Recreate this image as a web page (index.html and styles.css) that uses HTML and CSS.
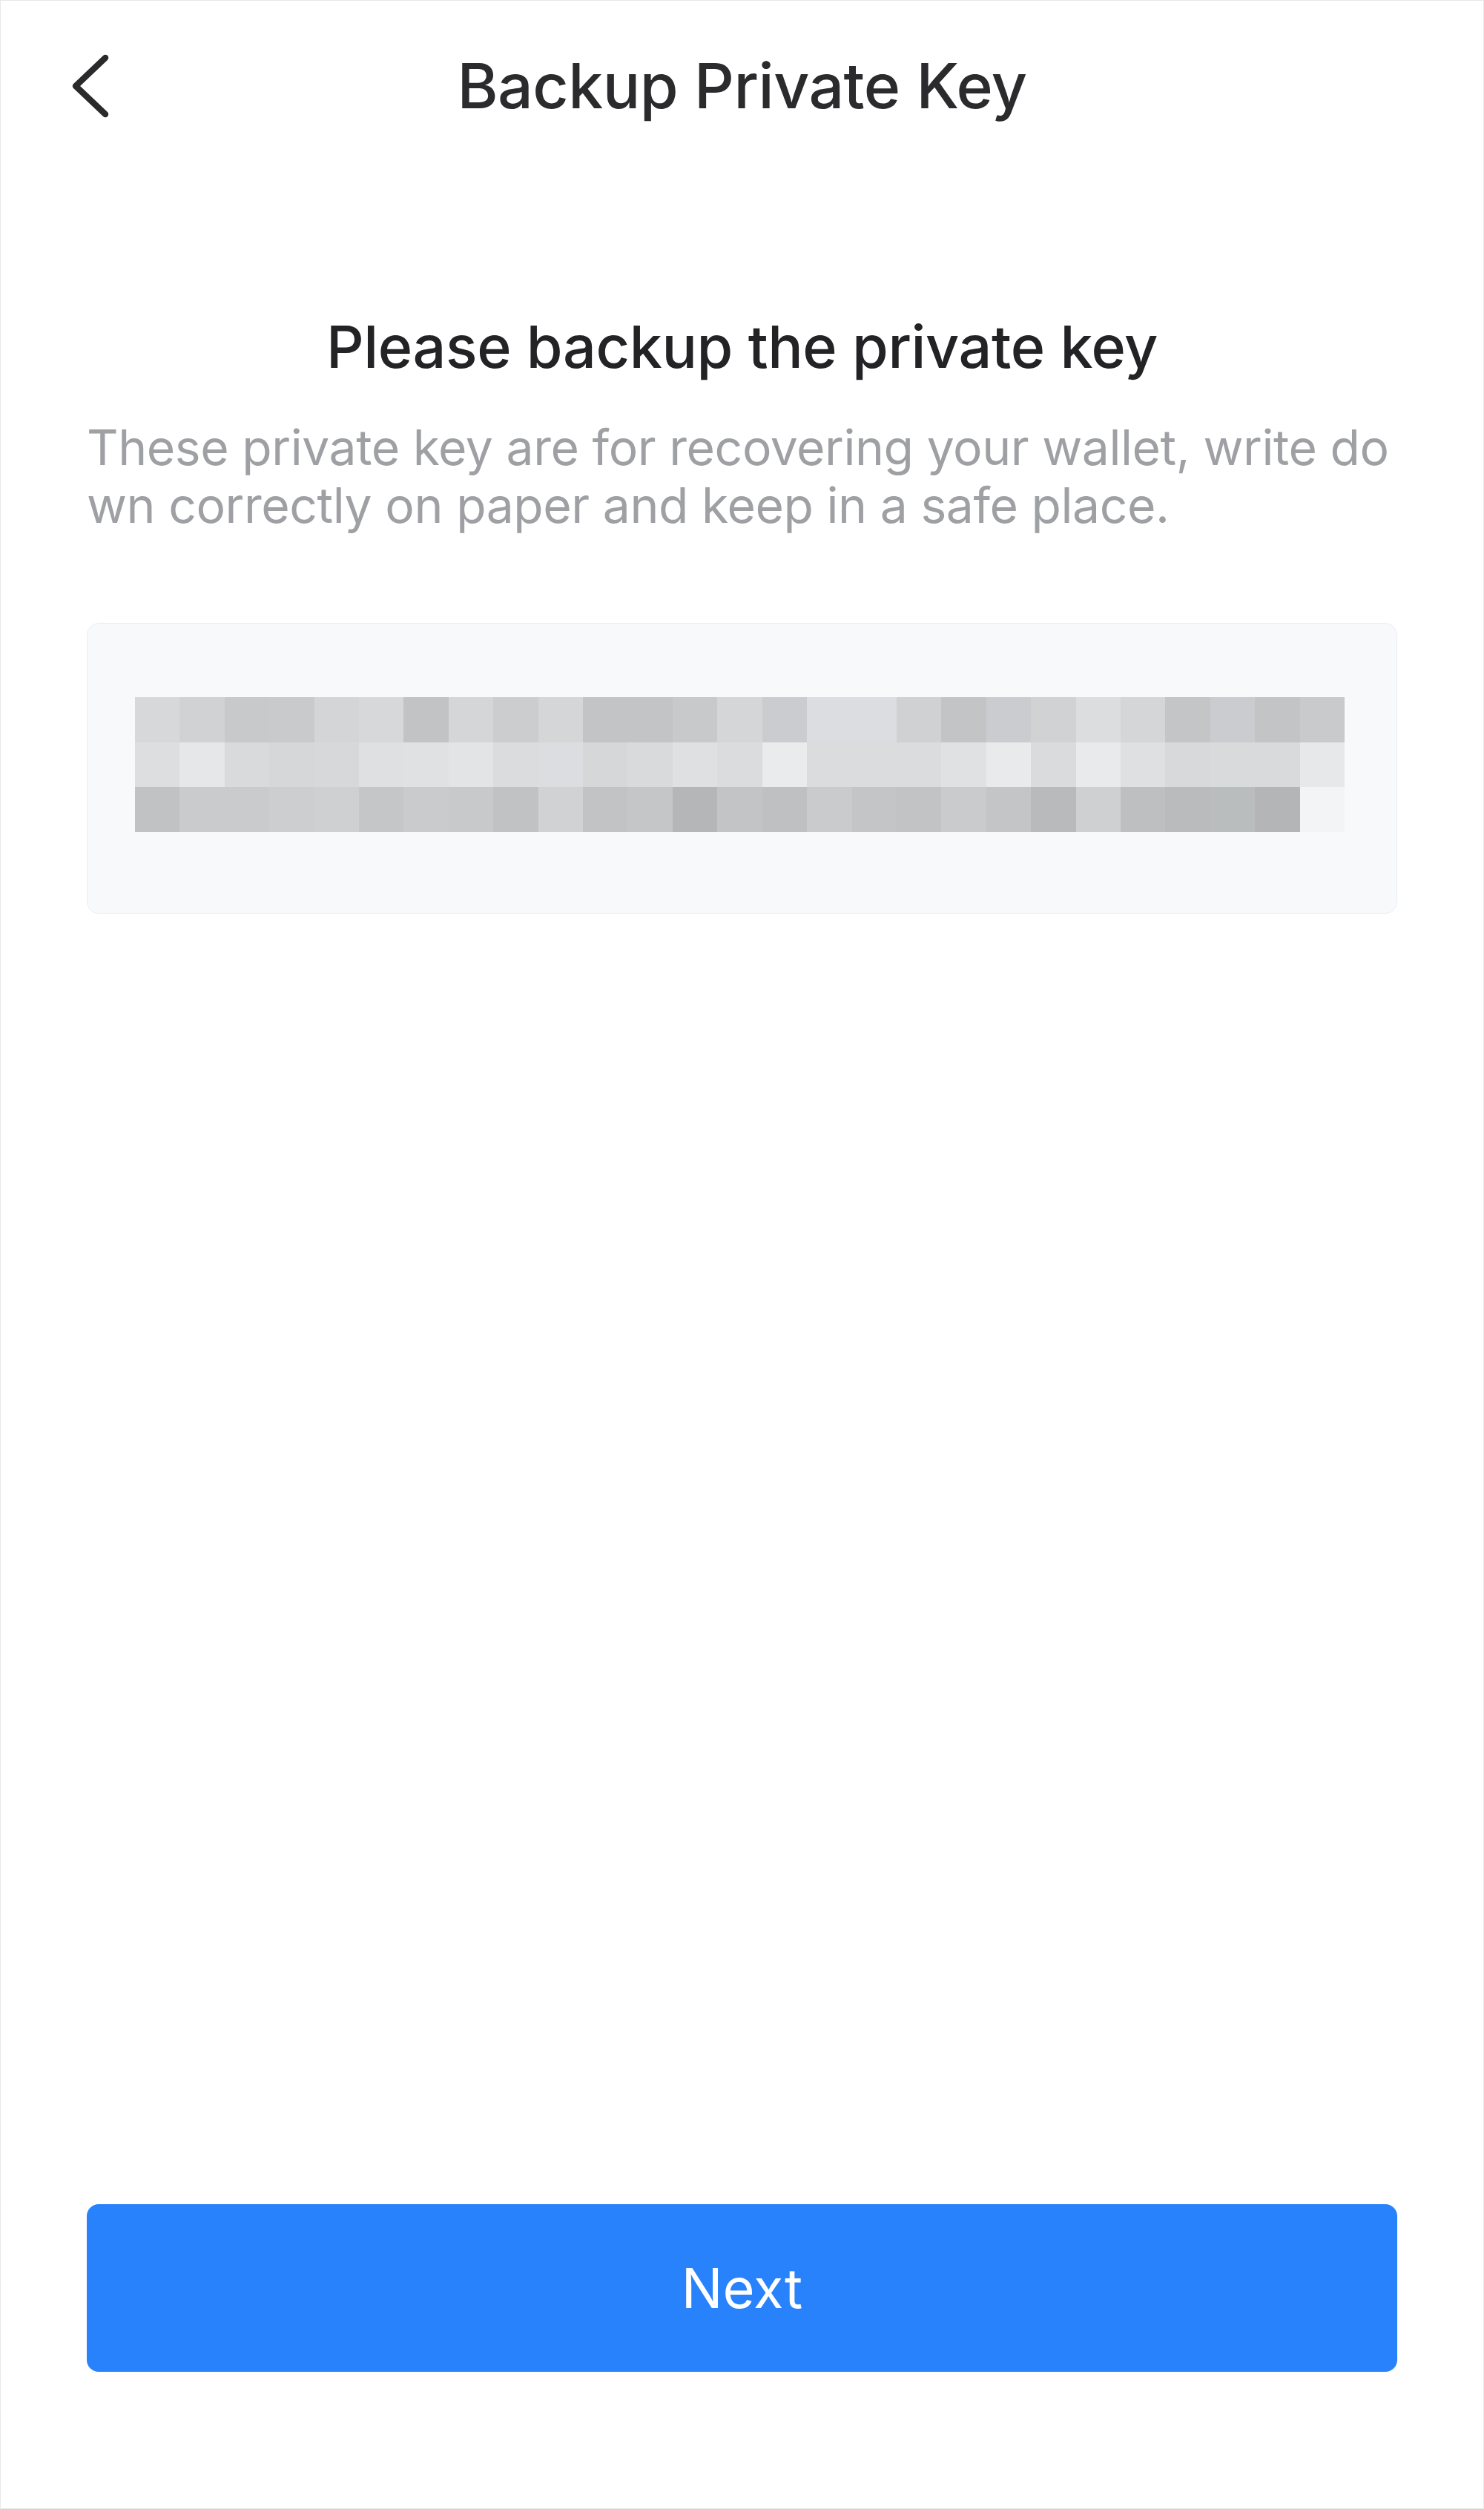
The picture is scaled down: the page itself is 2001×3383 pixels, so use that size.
FILE: index.html
```html
<!DOCTYPE html>
<html lang="en">
<head>
<meta charset="utf-8">
<title>Backup Private Key</title>
<link rel="stylesheet" href="styles.css">
</head>
<body>
<div class="screen">
  <header class="nav">
    <button class="back" aria-label="Back">
      <svg width="60" height="100" viewBox="0 0 60 100" fill="none">
        <path d="M54 12 L14 50 L54 88" stroke="#2a2a2c" stroke-width="8.5" stroke-linecap="round" stroke-linejoin="round"/>
      </svg>
    </button>
    <h1 class="nav-title">Backup Private Key</h1>
    <span class="nav-spacer"></span>
  </header>

  <main class="content">
    <h2 class="heading">Please backup the private key</h2>
    <p class="desc">These private key are for recovering your wallet, write down correctly on paper and keep in a safe place.</p>

    <div class="key-box">
      <div class="mosaic">
        <i style="background:#d7d8da"></i><i style="background:#d1d2d4"></i><i style="background:#c8c9cb"></i><i style="background:#c9cacc"></i><i style="background:#d4d5d7"></i><i style="background:#d7d8da"></i><i style="background:#c2c3c5"></i><i style="background:#d4d6d7"></i><i style="background:#cccdcf"></i><i style="background:#d5d6d8"></i><i style="background:#c3c4c6"></i><i style="background:#c3c4c6"></i><i style="background:#c8c9cb"></i><i style="background:#d5d6d8"></i><i style="background:#cbcccf"></i><i style="background:#dcdde0"></i><i style="background:#dcdde0"></i><i style="background:#d0d1d3"></i><i style="background:#c3c4c6"></i><i style="background:#cbcccf"></i><i style="background:#d1d2d4"></i><i style="background:#dcdddf"></i><i style="background:#d5d6d8"></i><i style="background:#c4c5c7"></i><i style="background:#cbcccf"></i><i style="background:#c3c4c6"></i><i style="background:#c9cacc"></i>
        <i style="background:#dddee0"></i><i style="background:#e6e7e9"></i><i style="background:#d9dadc"></i><i style="background:#d6d7d9"></i><i style="background:#d7d8da"></i><i style="background:#dfe0e2"></i><i style="background:#e0e1e3"></i><i style="background:#e3e4e6"></i><i style="background:#dbdcde"></i><i style="background:#dcdde0"></i><i style="background:#d6d7d9"></i><i style="background:#d9dadc"></i><i style="background:#dfe0e2"></i><i style="background:#dbdcde"></i><i style="background:#eaebed"></i><i style="background:#dbdcde"></i><i style="background:#dbdcde"></i><i style="background:#dbdcde"></i><i style="background:#e0e1e3"></i><i style="background:#e9eaec"></i><i style="background:#dadbdd"></i><i style="background:#e9eaec"></i><i style="background:#dfe0e2"></i><i style="background:#d8d9db"></i><i style="background:#d9dadc"></i><i style="background:#d9dadc"></i><i style="background:#e7e8ea"></i>
        <i style="background:#c1c2c4"></i><i style="background:#cacbcd"></i><i style="background:#cacbcd"></i><i style="background:#cdced0"></i><i style="background:#cfd0d2"></i><i style="background:#c5c6c8"></i><i style="background:#cacbcd"></i><i style="background:#c8c9cb"></i><i style="background:#c1c2c4"></i><i style="background:#d1d2d4"></i><i style="background:#c2c3c5"></i><i style="background:#c5c6c8"></i><i style="background:#b5b6b8"></i><i style="background:#c3c4c6"></i><i style="background:#bfc0c2"></i><i style="background:#cacbcd"></i><i style="background:#c4c5c7"></i><i style="background:#c2c3c5"></i><i style="background:#cacbcd"></i><i style="background:#c4c5c7"></i><i style="background:#b9babc"></i><i style="background:#cfd0d2"></i><i style="background:#bebfc1"></i><i style="background:#babbbd"></i><i style="background:#babdbe"></i><i style="background:#b4b5b7"></i><i style="background:#f3f4f6"></i>
      </div>
    </div>

    <button class="next-btn">Next</button>
  </main>
</div>
</body>
</html>
```

FILE: styles.css
```css
* {
  box-sizing: border-box;
}

html, body {
  margin: 0;
  padding: 0;
  background: #ffffff;
}

body {
  font-family: Inter, "Noto Sans", "Liberation Sans", sans-serif;
  -webkit-font-smoothing: antialiased;
}

.screen {
  width: 2001px;
  height: 3383px;
  border: 1px solid #e8e8e8;
  display: flex;
  flex-direction: column;
  background: #ffffff;
}

.nav {
  height: 229px;
  display: grid;
  grid-template-columns: 1fr auto 1fr;
  align-items: center;
  flex-shrink: 0;
}

.back {
  justify-self: start;
  margin-left: 87px;
  padding: 0;
  border: 0;
  background: none;
  display: flex;
  align-items: center;
}

.back svg {
  display: block;
}

.nav-title {
  margin: 0;
  font-size: 84px;
  font-weight: 500;
  line-height: 100px;
  color: #2b2b2d;
  letter-spacing: -0.5px;
}

.content {
  flex: 1;
  display: flex;
  flex-direction: column;
  padding: 0 116px 184px;
}

.heading {
  margin: 189px 0 0;
  text-align: center;
  font-size: 79px;
  font-weight: 500;
  line-height: 96px;
  color: #232326;
  letter-spacing: -0.4px;
}

.desc {
  margin: 49px 0 0;
  font-size: 66px;
  font-weight: 400;
  line-height: 78px;
  color: #9fa0a4;
  word-break: break-all;
  letter-spacing: -0.45px;
}

.key-box {
  margin-top: 120px;
  height: 392px;
  background: #f8f9fb;
  border: 1px solid #eceef1;
  border-radius: 16px;
  padding: 99px 0 0 64px;
}

.mosaic {
  width: 1631px;
  height: 182px;
  display: grid;
  grid-template-columns: repeat(27, 1fr);
  grid-template-rows: repeat(3, 1fr);
}

.mosaic i {
  display: block;
}

.next-btn {
  margin-top: auto;
  height: 226px;
  width: 100%;
  border: 0;
  border-radius: 16px;
  background: #2882fc;
  color: #ffffff;
  font-family: inherit;
  font-size: 74px;
  font-weight: 400;
}
```
